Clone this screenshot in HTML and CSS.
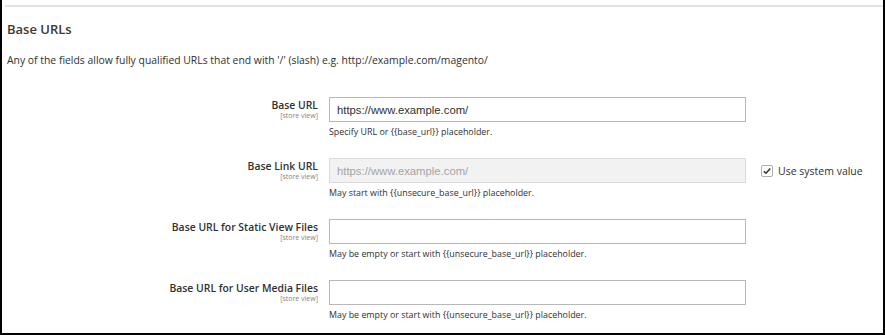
FILE: index.html
```html
<!DOCTYPE html>
<html lang="en">
<head>
    <meta charset="UTF-8">
    <meta name="viewport" content="width=device-width, initial-scale=1.0">
    <title>Base URLs</title>
    <link rel="stylesheet" href="styles.css">
</head>
<body>

<div class="frame">
    <div class="section">
        <h2 class="section-title">Base URLs</h2>
        <p class="comment">Any of the fields allow fully qualified URLs that end with '/' (slash) e.g. http://example.com/magento/</p>

        <div class="field">
            <div class="label">
                <span class="label-text">Base URL</span>
                <span class="scope">[store view]</span>
            </div>
            <div class="control">
                <input class="input-text" type="text" value="https://www.example.com/">
                <p class="note">Specify URL or {{base_url}} placeholder.</p>
            </div>
        </div>

        <div class="field">
            <div class="label">
                <span class="label-text">Base Link URL</span>
                <span class="scope">[store view]</span>
            </div>
            <div class="control">
                <input class="input-text" type="text" value="https://www.example.com/" disabled>
                <p class="note">May start with {{unsecure_base_url}} placeholder.</p>
            </div>
            <label class="use-default">
                <span class="checkbox">
                    <svg width="10" height="10" viewBox="0 0 10 10"><path d="M1.8 5.2 L4 7.3 L8.3 2.6" fill="none" stroke="#303030" stroke-width="1.5"/></svg>
                </span>
                Use system value
            </label>
        </div>

        <div class="field">
            <div class="label">
                <span class="label-text">Base URL for Static View Files</span>
                <span class="scope">[store view]</span>
            </div>
            <div class="control">
                <input class="input-text" type="text" value="">
                <p class="note">May be empty or start with {{unsecure_base_url}} placeholder.</p>
            </div>
        </div>

        <div class="field">
            <div class="label">
                <span class="label-text">Base URL for User Media Files</span>
                <span class="scope">[store view]</span>
            </div>
            <div class="control">
                <input class="input-text" type="text" value="">
                <p class="note">May be empty or start with {{unsecure_base_url}} placeholder.</p>
            </div>
        </div>
    </div>
</div>

</body>
</html>
```

FILE: styles.css
```css
body {
    margin: 0;
    font-family: "Open Sans", "Liberation Sans", sans-serif;
    color: #303030;
    background: #fff;
}
.frame {
    box-sizing: border-box;
    height: 335px;
    padding: 5px 0 0 3px;
    border-left: 2px solid #000;
    border-right: 2px solid #000;
    border-bottom: 2px solid #000;
    background: #fff;
}
.section {
    border-top: 2px solid #e3e3e3;
    padding-left: 2px;
}
.section-title {
    margin: 14px 0 0 0;
    font-size: 13px;
    font-weight: 600;
    line-height: 16px;
    color: #41362f;
}
.comment {
    margin: 16px 0 0 0;
    font-size: 10.4px;
    line-height: 14px;
}
.field {
    display: flex;
    align-items: flex-start;
    height: 40px;
    margin-bottom: 21px;
}
.comment + .field {
    margin-top: 30px;
}
.label {
    width: 311px;
    margin-right: 11px;
    padding-top: 2px;
    text-align: right;
    display: flex;
    flex-direction: column;
}
.label-text {
    font-size: 10.4px;
    font-weight: 600;
    line-height: 12px;
}
.scope {
    font-size: 7px;
    line-height: 9px;
    color: #858585;
}
.control {
    width: 417px;
}
.input-text {
    display: block;
    box-sizing: border-box;
    width: 417px;
    height: 25px;
    margin: 0;
    padding: 0 7px;
    border: 1px solid #b8b8b8;
    background: #fff;
    font-family: "Liberation Sans", Arial, sans-serif;
    font-size: 11.3px;
    color: #303030;
}
.input-text:disabled {
    background: #f2f2f2;
    border-color: #dadada;
    color: #a5a5a5;
}
.note {
    margin: 4px 0 0 0;
    font-size: 8.9px;
    line-height: 11px;
}
.use-default {
    display: flex;
    align-items: center;
    gap: 5px;
    margin-left: 15px;
    margin-top: 6px;
    font-size: 10.5px;
    line-height: 14px;
}
.checkbox {
    display: flex;
    align-items: center;
    justify-content: center;
    box-sizing: border-box;
    width: 12px;
    height: 12px;
    border: 1px solid #adadad;
    border-radius: 2px;
    background: #fff;
}
```
